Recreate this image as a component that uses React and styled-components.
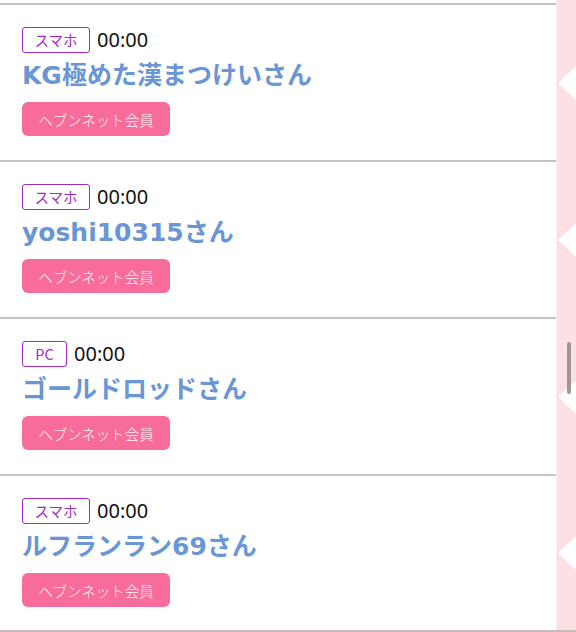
import React from 'react';
import styled, { createGlobalStyle } from 'styled-components';

const GlobalStyle = createGlobalStyle`
  html, body {
    margin: 0;
    padding: 0;
    background: #fff;
  }
  body {
    font-family: "Noto Sans CJK JP", "Noto Sans", sans-serif;
    -webkit-font-smoothing: antialiased;
  }
`;

const Page = styled.div`
  display: flex;
  width: 576px;
  height: 632px;
  overflow: hidden;
  border-bottom: 2px solid #c9b9bc;
  box-sizing: border-box;
`;

const List = styled.ul`
  flex: 0 0 557px;
  margin: 0;
  padding: 3px 0 0;
  list-style: none;
  background: #fff;
  border-right: 1px solid #f6eeee;
  box-sizing: border-box;
`;

const Item = styled.li`
  height: 157px;
  box-sizing: border-box;
  padding: 22px 0 0 22px;
  border-top: 2px solid #c4c4c4;
`;

const MetaRow = styled.div`
  display: flex;
  align-items: center;
  gap: 7px;
  height: 26px;
`;

const DeviceBadge = styled.span`
  display: inline-flex;
  align-items: center;
  justify-content: center;
  box-sizing: border-box;
  height: 26px;
  min-width: ${props => props.wide ? 68 : 45}px;
  padding: 0 10px;
  border: 1.5px solid #a42ac6;
  border-radius: 3px;
  color: #a42ac6;
  font-size: 14.5px;
  line-height: 1;
`;

const Time = styled.span`
  font-family: "Noto Sans", sans-serif;
  font-size: 20px;
  color: #111;
  line-height: 1;
`;

const Name = styled.div`
  margin-top: 5px;
  height: 36px;
  line-height: 36px;
  font-family: "DejaVu Sans", "Noto Sans CJK JP", sans-serif;
  font-size: 25px;
  font-weight: 700;
  color: #6b96d6;
  white-space: nowrap;
`;

const MemberButton = styled.button`
  display: flex;
  align-items: center;
  justify-content: center;
  margin-top: 8px;
  width: 148px;
  height: 34px;
  padding: 0;
  border: none;
  border-radius: 6px;
  background: #f76c9b;
  color: #fff2f6;
  font-family: "Noto Sans CJK JP", sans-serif;
  font-size: 14.5px;
  font-weight: 300;
`;

const Side = styled.div`
  position: relative;
  flex: 1;
  background: #fde0e3;
`;

const Notches = styled.svg`
  display: block;
`;

const ScrollThumb = styled.div`
  position: absolute;
  left: 10px;
  top: 342px;
  width: 4px;
  height: 52px;
  border-radius: 2px;
  background: #a09597;
`;

const rows = [
  { device: 'スマホ', name: 'KG極めた漢まつけいさん' },
  { device: 'スマホ', name: 'yoshi10315さん' },
  { device: 'PC', name: 'ゴールドロッドさん' },
  { device: 'スマホ', name: 'ルフランラン69さん' },
];

const notchCenters = [83, 240, 397, 553];

export default function App() {
  return (
    <>
      <GlobalStyle />
      <Page>
        <List>
          {rows.map((row, i) => (
            <Item key={i}>
              <MetaRow>
                <DeviceBadge wide={row.device !== 'PC'}>{row.device}</DeviceBadge>
                <Time>00:00</Time>
              </MetaRow>
              <Name>{row.name}</Name>
              <MemberButton>ヘブンネット会員</MemberButton>
            </Item>
          ))}
        </List>
        <Side>
          <Notches width="19" height="630" viewBox="0 0 19 630">
            {notchCenters.map(c => (
              <polygon key={c} points={`1,${c} 19,${c - 17} 19,${c + 17}`} fill="#fff" />
            ))}
          </Notches>
          <ScrollThumb />
        </Side>
      </Page>
    </>
  );
}
